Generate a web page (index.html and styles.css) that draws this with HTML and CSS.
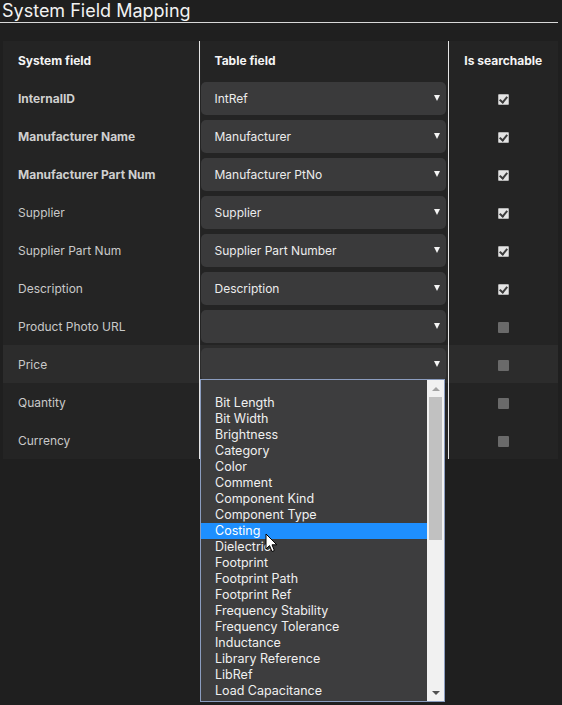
FILE: index.html
```html
<!DOCTYPE html>
<html lang="en">
    <head>
        <meta charset="UTF-8">
        <meta name="viewport" content="width=device-width, initial-scale=1.0">
        <title>System Field Mapping</title>
        <link rel="stylesheet" href="styles.css">
    </head>

    <body>
        <h2 class="title">System Field Mapping</h2>

        <div class="mapping-wrap">
            <table class="mapping">
                <thead>
                    <tr>
                        <th>System field</th>
                        <th>Table field</th>
                        <th class="center">Is searchable</th>
                    </tr>
                </thead>
                <tbody>
                    <tr>
                        <td class="required">InternalID</td>
                        <td><div class="select">IntRef<span class="arrow"></span></div></td>
                        <td class="center"><span class="check on"></span></td>
                    </tr>
                    <tr>
                        <td class="required">Manufacturer Name</td>
                        <td><div class="select">Manufacturer<span class="arrow"></span></div></td>
                        <td class="center"><span class="check on"></span></td>
                    </tr>
                    <tr>
                        <td class="required">Manufacturer Part Num</td>
                        <td><div class="select">Manufacturer PtNo<span class="arrow"></span></div></td>
                        <td class="center"><span class="check on"></span></td>
                    </tr>
                    <tr>
                        <td>Supplier</td>
                        <td><div class="select">Supplier<span class="arrow"></span></div></td>
                        <td class="center"><span class="check on"></span></td>
                    </tr>
                    <tr>
                        <td>Supplier Part Num</td>
                        <td><div class="select">Supplier Part Number<span class="arrow"></span></div></td>
                        <td class="center"><span class="check on"></span></td>
                    </tr>
                    <tr>
                        <td>Description</td>
                        <td><div class="select">Description<span class="arrow"></span></div></td>
                        <td class="center"><span class="check on"></span></td>
                    </tr>
                    <tr>
                        <td>Product Photo URL</td>
                        <td><div class="select"><span class="arrow"></span></div></td>
                        <td class="center"><span class="check"></span></td>
                    </tr>
                    <tr class="hover">
                        <td>Price</td>
                        <td><div class="select"><span class="arrow"></span></div></td>
                        <td class="center"><span class="check"></span></td>
                    </tr>
                    <tr>
                        <td>Quantity</td>
                        <td></td>
                        <td class="center"><span class="check"></span></td>
                    </tr>
                    <tr>
                        <td>Currency</td>
                        <td></td>
                        <td class="center"><span class="check"></span></td>
                    </tr>
                </tbody>
            </table>

            <!-- open list of the Price select -->
            <div class="dropdown">
                <ul class="options">
                    <li class="empty"></li>
                    <li>Bit Length</li>
                    <li>Bit Width</li>
                    <li>Brightness</li>
                    <li>Category</li>
                    <li>Color</li>
                    <li>Comment</li>
                    <li>Component Kind</li>
                    <li>Component Type</li>
                    <li class="selected">Costing</li>
                    <li>Dielectric</li>
                    <li>Footprint</li>
                    <li>Footprint Path</li>
                    <li>Footprint Ref</li>
                    <li>Frequency Stability</li>
                    <li>Frequency Tolerance</li>
                    <li>Inductance</li>
                    <li>Library Reference</li>
                    <li>LibRef</li>
                    <li>Load Capacitance</li>
                </ul>
                <div class="scrollbar">
                    <span class="btn-up"></span>
                    <div class="track"><div class="thumb"></div></div>
                    <span class="btn-down"></span>
                </div>
            </div>

            <svg class="cursor" width="14" height="20" viewBox="0 0 14 20">
                <path d="M1 1 L1 16 L4.5 12.6 L7 18.5 L9.4 17.5 L7 11.8 L11.8 11.8 Z" fill="#fff" stroke="#000" stroke-width="1" stroke-linejoin="round"/>
            </svg>
        </div>
    </body>

</html>
```

FILE: styles.css
```css
* {
    margin: 0;
    padding: 0;
    box-sizing: border-box;
}

html,
body {
    min-height: 100%;
}

body {
    background: #1f1f1f;
    color: #e6e6e6;
    font-family: Inter, 'Noto Sans', sans-serif;
    font-size: 12px;
}

.title {
    font-size: 18px;
    font-weight: 400;
    line-height: 22px;
    color: #f2f2f2;
    padding-left: 2px;
    margin-right: 4px;
    border-bottom: 1px solid #d8d8d8;
}

.mapping-wrap {
    position: relative;
    min-height: 664px;
    margin: 18px 4px 0 3px;
}

.mapping {
    width: 555px;
    border-collapse: collapse;
    background: #242424;
    table-layout: fixed;

    & th,
    & td {
        height: 38px;
        padding: 0;
        text-align: left;
        vertical-align: middle;
    }

    & th:nth-child(1),
    & td:nth-child(1) {
        width: 196px;
        padding-left: 15px;
        border-right: 1px solid #e6e6e6;
    }

    & th:nth-child(2),
    & td:nth-child(2) {
        width: 249px;
        border-right: 1px solid #e6e6e6;
    }

    & th {
        font-weight: 700;
        color: #f4f4f4;
    }

    & th:nth-child(2) {
        padding-left: 15px;
    }

    & td {
        color: #c9c9c9;
    }

    & td.required {
        font-weight: 700;
        color: #cfcfcf;
    }

    & .center,
    & th.center {
        text-align: center;
        padding-left: 0;
    }

    & tr.hover td {
        background: #2c2c2c;
    }
}

.select {
    position: relative;
    height: 33px;
    margin: 0 2px 0 1px;
    padding-left: 14px;
    border-radius: 5px;
    background: #3a3a3b;
    color: #ececec;
    line-height: 34px;

    & .arrow {
        position: absolute;
        right: 6px;
        top: 13px;
        width: 0;
        height: 0;
        border-left: 3.5px solid transparent;
        border-right: 3.5px solid transparent;
        border-top: 6px solid #f4f4f4;
    }
}

.check {
    display: inline-block;
    width: 11px;
    height: 11px;
    vertical-align: middle;
    border-radius: 1px;
    background: #6a6a6a;

    &.on {
        position: relative;
        background: #e4e4e4;
        border: 1px solid #b4b4b4;

        &::after {
            content: '';
            position: absolute;
            left: 2px;
            top: 0;
            width: 3px;
            height: 6px;
            border-right: 2px solid #3c3c3c;
            border-bottom: 2px solid #3c3c3c;
            transform: rotate(40deg);
        }
    }
}

.dropdown {
    position: absolute;
    left: 197px;
    top: 338px;
    width: 245px;
    height: 323px;
    display: flex;
    background: #3d3d3e;
    border: 1px solid #8b9dc0;
    z-index: 2;
}

.options {
    flex: 1;
    list-style: none;
    overflow: hidden;

    & li {
        height: 16px;
        line-height: 16px;
        padding-left: 14px;
        font-size: 12.5px;
        color: #f0f0f0;
        white-space: nowrap;
    }

    & li.empty {
        height: 15px;
    }

    & li.selected {
        background: #1e8fff;
        color: #fff;
    }
}

.scrollbar {
    width: 17px;
    display: flex;
    flex-direction: column;
    background: #f1f1f1;

    & .btn-up,
    & .btn-down {
        height: 17px;
        display: flex;
        justify-content: center;
        align-items: center;
    }

    & .btn-up::before {
        content: '';
        border-left: 4px solid transparent;
        border-right: 4px solid transparent;
        border-bottom: 4px solid #a3a3a3;
    }

    & .btn-down::before {
        content: '';
        border-left: 4px solid transparent;
        border-right: 4px solid transparent;
        border-top: 4px solid #505050;
    }

    & .track {
        flex: 1;
        padding: 0 2px;
    }

    & .thumb {
        height: 143px;
        background: #c1c1c1;
    }
}

.cursor {
    position: absolute;
    left: 262px;
    top: 492px;
    z-index: 3;
}
```
